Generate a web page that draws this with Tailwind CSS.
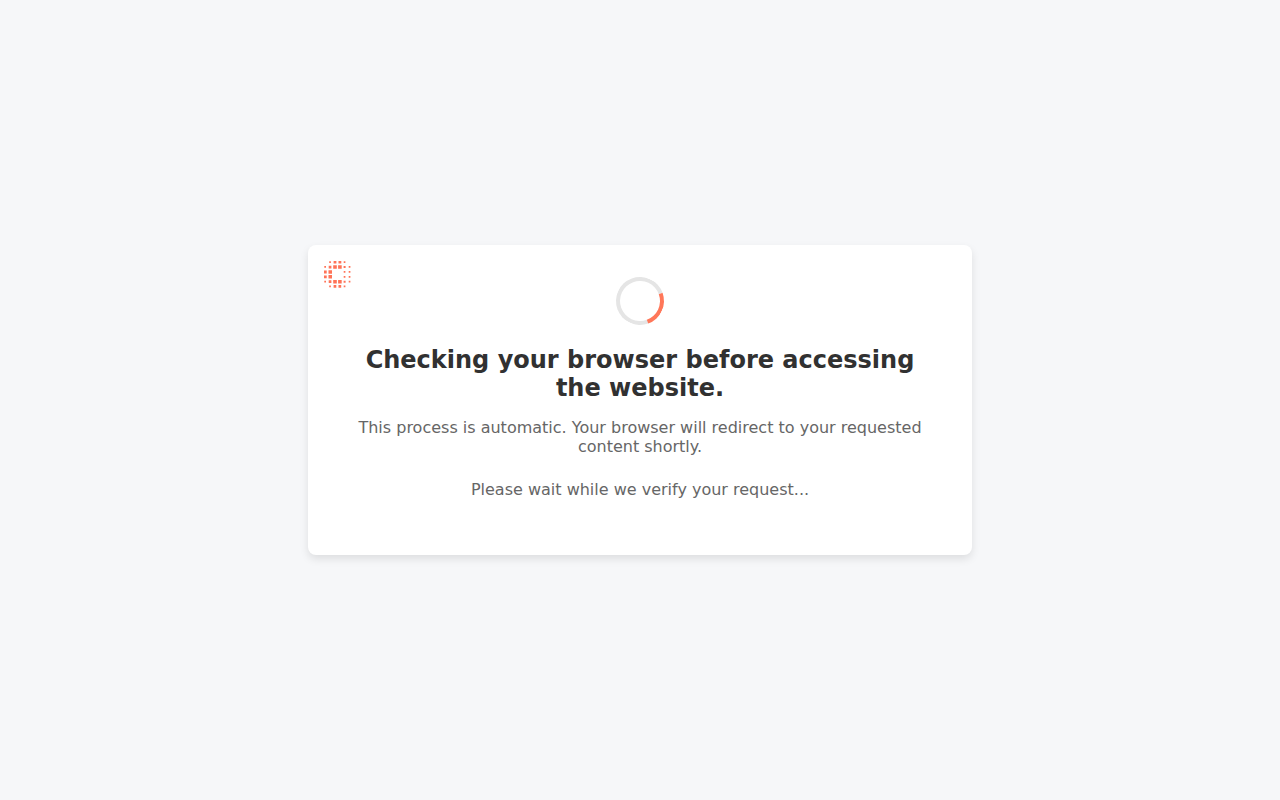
<!DOCTYPE html>
<html lang="en">
  <head>
    <meta charset="UTF-8" />
    <meta name="viewport" content="width=device-width, initial-scale=1.0" />
    <script src="https://cdn.jsdelivr.net/npm/@tailwindcss/browser@4"></script>
    <title>Checking your browser</title>
  </head>
  <body
    class="bg-[#f6f7f9] min-h-screen flex items-center justify-center font-['DejaVu_Sans',sans-serif]"
  >
    <main
      class="relative w-full max-w-[664px] flex flex-col items-center bg-white rounded-lg shadow-[0_4px_8px_rgba(0,0,0,0.1)] px-8 pt-8 pb-14 text-center"
    >
      <!-- Logo -->
      <svg
        class="absolute top-4 left-4 w-7 h-7"
        viewBox="0 0 28 28"
        fill="#ff7357"
        aria-hidden="true"
      >
        <path
          d="M5.2 .3h1.7v1.7h-1.7zM9.6 0h2.8v2.6h-2.8zM14.5 0h2.8v2.6h-2.8zM19.7.3h1.7v1.7h-1.7z"
        />
        <path
          d="M.3 5.1h1.7v1.7h-1.7zM4.7 4.7h2.7v2.7h-2.7zM9.2 4.2h3.6v3.6h-3.6zM14.1 4.2h3.6v3.6h-3.6zM19.6 5h2v2h-2zM24.7 5.1h1.7v1.7h-1.7z"
        />
        <path
          d="M0 9.5h2.7v2.9h-2.7zM4.5 9.2h3.5v3.6h-3.5zM19.7 10.1h1.7v1.7h-1.7zM24.7 10.1h1.7v1.7h-1.7z"
        />
        <path
          d="M0 14.4h2.7v2.9h-2.7zM4.5 14h3.5v3.6h-3.5zM19.7 15h1.7v1.7h-1.7zM24.7 15h1.7v1.7h-1.7z"
        />
        <path
          d="M.3 19.8h1.7v1.7h-1.7zM4.7 19.3h2.7v2.7h-2.7zM9.2 18.9h3.6v3.6h-3.6zM14.1 18.9h3.6v3.6h-3.6zM19.6 19.7h2v2h-2zM24.7 19.8h1.7v1.7h-1.7z"
        />
        <path
          d="M5.2 24.6h1.7v1.7h-1.7zM9.6 24.1h2.7v2.7h-2.7zM14.5 24.1h2.7v2.7h-2.7zM19.7 24.6h1.7v1.7h-1.7z"
        />
      </svg>

      <!-- Spinner -->
      <div
        class="w-12 h-12 rounded-full border-4 border-[#e5e5e5] border-r-[#ff7759] rotate-[25deg]"
        role="status"
        aria-label="Loading"
      ></div>

      <h1 class="mt-[21px] text-[24px] leading-[28px] font-bold text-[#313131]">
        Checking your browser before accessing the website.
      </h1>
      <p class="mt-4 text-[16px] leading-[19px] text-[#666]">
        This process is automatic. Your browser will redirect to your requested
        content shortly.
      </p>
      <p class="mt-6 text-[16px] leading-[19px] text-[#666]">
        Please wait while we verify your request...
      </p>
    </main>
  </body>
</html>
